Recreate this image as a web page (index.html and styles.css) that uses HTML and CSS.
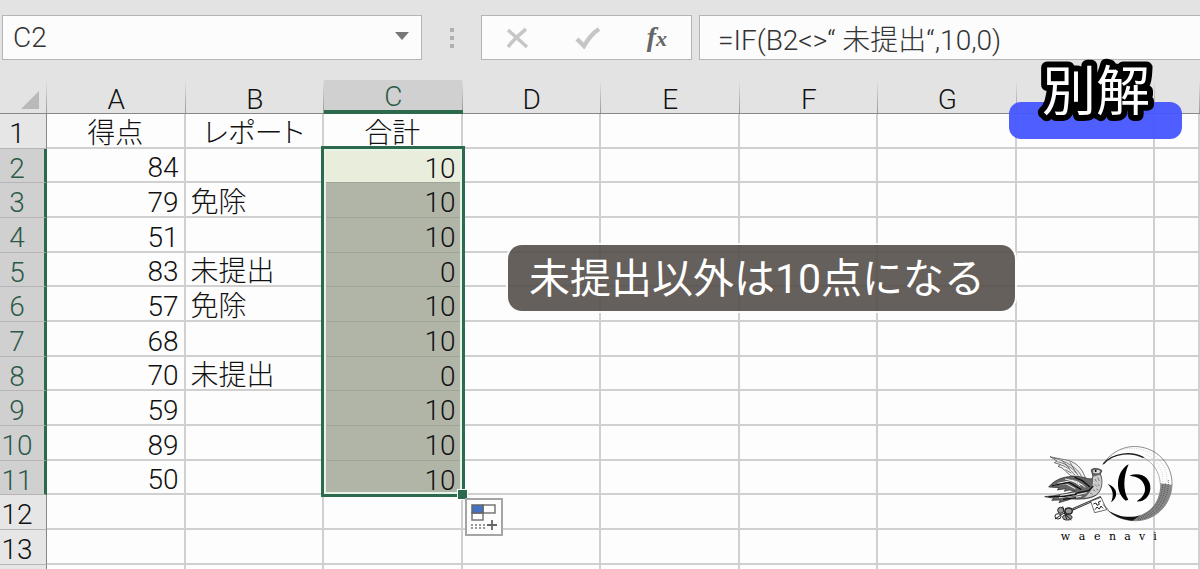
FILE: index.html
```
<!DOCTYPE html>
<html lang="ja">
<head>
    <meta charset="UTF-8">
    <meta name="viewport" content="width=device-width, initial-scale=1.0">
    <title>別解 - IF関数</title>
    <link rel="stylesheet" href="styles.css">
</head>
<body>
    <div class="window">
    <div class="formula-bar">
        <div class="name-box">
            <input type="text" id="cellName" aria-label="名前ボックス" value="C2">
            <button type="button" aria-label="名前の一覧">
                <svg width="14" height="8" viewBox="0 0 14 8"><path d="M0 0h14L7 8z" fill="#777"/></svg>
            </button>
        </div>
        <div class="dots"><i></i><i></i><i></i></div>
        <div class="tools">
            <button type="button" aria-label="キャンセル">
                <svg width="24" height="22" viewBox="0 0 24 22"><path d="M2 3l19 17M20 2C13 8 7 13 2 20" fill="none" stroke="#c6c6c6" stroke-width="3.5"/></svg>
            </button>
            <button type="button" aria-label="入力">
                <svg width="26" height="22" viewBox="0 0 26 22"><path d="M2 12l7 7C13 12 18 6 24 2" fill="none" stroke="#c6c6c6" stroke-width="4.5"/></svg>
            </button>
            <button type="button" class="fx" aria-label="関数の挿入">f<small>x</small></button>
        </div>
        <input type="text" class="formula" id="formula" aria-label="数式バー" value="=IF(B2&lt;&gt;“ 未提出“,10,0)">
    </div>

    <div class="sheet-area">
    <table class="sheet">
        <colgroup>
            <col class="col-head">
            <col><col><col><col><col><col><col><col>
            <col class="col-last">
        </colgroup>
        <thead>
            <tr>
                <th class="corner"><svg width="18" height="18" viewBox="0 0 18 18"><path d="M18 0v18H0z" fill="#b9b9b9"/></svg></th>
                <th>A</th>
                <th>B</th>
                <th class="active">C</th>
                <th>D</th>
                <th>E</th>
                <th>F</th>
                <th>G</th>
                <th></th>
                <th></th>
            </tr>
        </thead>
        <tbody>
            <tr class="titles"><th>1</th><td>得点</td><td>レポート</td><td>合計</td><td></td><td></td><td></td><td></td><td></td><td></td></tr>
            <tr class="picked">
                <th>2</th><td class="num">84</td><td></td>
                <td class="num total first">10
                    <div class="selection">
                        <span class="handle"></span>
                        <button type="button" class="autofill" aria-label="オートフィル オプション">
                            <svg width="28" height="28" viewBox="0 0 28 28">
                                <path d="M13 2h12v8H13zM2 10h11v7H2z" fill="#fff" stroke="#777" stroke-width="1.5"/>
                                <path d="M2 2h11v8H2z" fill="#4472c4" stroke="#666" stroke-width="1.5"/>
                                <path d="M1 22h14M1 25h14" stroke="#777" stroke-width="1.5" stroke-dasharray="2 2"/>
                                <path d="M22 17v10M17 22h10" stroke="#666" stroke-width="1.8"/>
                            </svg>
                        </button>
                    </div>
                </td>
                <td></td><td></td><td></td><td></td><td></td><td></td>
            </tr>
            <tr class="picked"><th>3</th><td class="num">79</td><td>免除</td><td class="num total">10</td><td></td><td></td><td></td><td></td><td></td><td></td></tr>
            <tr class="picked"><th>4</th><td class="num">51</td><td></td><td class="num total">10</td><td></td><td></td><td></td><td></td><td></td><td></td></tr>
            <tr class="picked"><th>5</th><td class="num">83</td><td>未提出</td><td class="num total">0</td><td></td><td></td><td></td><td></td><td></td><td></td></tr>
            <tr class="picked"><th>6</th><td class="num">57</td><td>免除</td><td class="num total">10</td><td></td><td></td><td></td><td></td><td></td><td></td></tr>
            <tr class="picked"><th>7</th><td class="num">68</td><td></td><td class="num total">10</td><td></td><td></td><td></td><td></td><td></td><td></td></tr>
            <tr class="picked"><th>8</th><td class="num">70</td><td>未提出</td><td class="num total">0</td><td></td><td></td><td></td><td></td><td></td><td></td></tr>
            <tr class="picked"><th>9</th><td class="num">59</td><td></td><td class="num total">10</td><td></td><td></td><td></td><td></td><td></td><td></td></tr>
            <tr class="picked"><th>10</th><td class="num">89</td><td></td><td class="num total">10</td><td></td><td></td><td></td><td></td><td></td><td></td></tr>
            <tr class="picked"><th>11</th><td class="num">50</td><td></td><td class="num total">10</td><td></td><td></td><td></td><td></td><td></td><td></td></tr>
            <tr><th>12</th><td></td><td></td><td></td><td></td><td></td><td></td><td></td><td></td><td></td></tr>
            <tr><th>13</th><td></td><td></td><td></td><td></td><td></td><td></td><td></td><td></td><td></td></tr>
            <tr><th></th><td></td><td></td><td></td><td></td><td></td><td></td><td></td><td></td><td></td></tr>
        </tbody>
    </table>
    </div>

    <div class="badge">
        <svg width="140" height="80" viewBox="0 0 140 80"><text x="16" y="58">別解</text></svg>
    </div>
    <div class="caption">未提出以外は10点になる</div>

    <svg class="logo" viewBox="0 0 510 390" role="img" aria-label="waenavi">
        <!-- ring -->
        <path d="M218 104C245 62 290 44 332 51C392 61 428 112 426 164C423 230 370 276 309 272C276 270 247 256 232 239" fill="none" stroke="#555" stroke-width="2"/>
        <path d="M232 239C262 260 300 267 334 254L309 272C276 270 247 256 232 239z" fill="#111"/>
        <path d="M391 160L426 164C423 230 370 276 309 272L334 254C371 238 391 209 391 160z" fill="#888"/>
        <path d="M220 102C250 67 306 64 341 83" fill="none" stroke="#222" stroke-width="4"/>
        <path d="M341 83C370 99 389 125 391 163" fill="none" stroke="#888" stroke-width="2"/>
        <g fill="none" stroke="#333" stroke-width="2" stroke-dasharray="3 3">
            <path d="M398 165C396 214 364 253 318 263"/>
            <path d="M406 160C405 219 366 261 316 267"/>
            <path d="M415 150C417 219 373 264 322 270"/>
        </g>
        <g fill="none" stroke="#999" stroke-width="2" stroke-dasharray="2 5">
            <path d="M270 60C320 46 370 62 398 104C408 120 412 140 410 158"/>
            <path d="M350 74C386 93 400 124 399 156"/>
        </g>
        <!-- mark -->
        <path d="M233 162C263 172 267 201 243 217C253 195 249 178 233 162z"/>
        <path d="M296 103C260 122 251 183 287 212L295 209C278 181 280 139 296 103z"/>
        <path d="M298 137C334 124 363 145 361 176C359 202 340 216 320 214C341 201 348 186 344 169C339 149 323 139 298 137z"/>
        <!-- key -->
        <g fill="none" stroke="#222">
            <path d="M128 238L213 201" stroke-width="7"/>
            <path d="M130 237L211 202" stroke="#ddd" stroke-width="2"/>
            <path d="M182 214L213 202L230 239L194 248z" fill="#fff" stroke-width="2"/>
            <path d="M190 222l8-3 3 7 7-3-3-7 8-3M195 239l6-8 7 6 5-9 6 7" stroke-width="3"/>
            <path d="M218 223L236 240" stroke-width="2"/>
            <ellipse cx="92" cy="241" rx="9" ry="9" fill="#999" stroke-width="3"/>
            <ellipse cx="116" cy="243" rx="11" ry="9" fill="#999" stroke-width="4"/>
            <ellipse cx="84" cy="259" rx="9" ry="8" fill="#fff" stroke-width="3"/>
            <ellipse cx="112" cy="262" rx="14" ry="8" fill="#999" stroke-width="3"/>
            <path d="M98 229l12 38M75 267l27-18 22 21" stroke-width="3"/>
        </g>
        <!-- dove -->
        <path d="M60 80C90 88 119 88 139 103C158 119 161 132 168 147L142 141L122 137L107 124L98 115L84 109L92 104L73 98L81 93z" fill="#eee" stroke="#333" stroke-width="2"/>
        <path d="M71 84C110 95 139 111 155 139M82 95C112 102 132 117 145 137M93 105C114 111 125 123 135 136M106 119L124 129M120 97L139 130M96 91L119 116" fill="none" stroke="#444" stroke-width="2"/>
        <path d="M56 171C77 145 108 138 139 139C161 140 176 149 184 146C195 140 181 123 184 119C190 113 207 114 216 122L211 132C220 152 217 181 199 195C181 208 151 208 124 207L87 218L91 210L65 211L72 205L44 200L72 197L109 190L136 183L118 180L103 184L107 176L82 180L87 173z" fill="#666" stroke="#222" stroke-width="2"/>
        <path d="M189 140L210 134C219 154 215 180 199 193C188 200 176 203 162 203C184 189 191 168 189 140z" fill="#ccc"/>
        <g fill="none" stroke="#eee" stroke-width="3">
            <path d="M83 160L128 151L151 168M105 147L142 155L166 172M70 165L107 161L136 176"/>
            <path d="M87 203L133 196L170 188M114 205L154 199M91 196L142 188M120 151L158 165"/>
        </g>
        <g fill="none" stroke="#111" stroke-width="4">
            <path d="M66 167L118 157L154 179M134 142L157 152L180 171M135 190L176 182L190 168"/>
            <path d="M56 200L104 199L140 193M99 208L138 203"/>
        </g>
        <path d="M195 147l4 8M203 143l5 10M195 163l6 7M203 162l6 6M188 178l8 5M199 177l6 3M180 190l9 3" fill="none" stroke="#555" stroke-width="2"/>
        <path d="M190 120L207 120L211 126L205 130L190 129z" fill="#ddd"/>
        <circle cx="197" cy="123" r="3"/>
        <text x="92 146 192 237 283 327 370" y="331">waenavi</text>
    </svg>
    </div>
</body>
</html>
```
FILE: styles.css
```
* {
    box-sizing: border-box;
}
body {
    margin: 0;
    background: #e3e3e3;
    font-family: Roboto, "Noto Sans CJK JP", sans-serif;
    font-size: 28px;
    font-weight: 300;
    color: #111;
}
button {
    padding: 0;
    border: none;
    background: none;
}
input {
    min-width: 0;
    border: none;
    outline: none;
    background: none;
    font: inherit;
    color: #333;
}
.window {
    position: relative;
    display: flex;
    flex-direction: column;
    height: 100vh;
    overflow: hidden;
}

/* formula bar */
.formula-bar {
    display: flex;
    padding: 15px 0 20px 2px;
}
.name-box, .tools, .formula {
    height: 45px;
    border: 1px solid #b5b5b5;
    background: #fcfcfc;
}
.name-box {
    display: flex;
    align-items: center;
    width: 420px;
    padding: 0 12px 0 10px;
}
.name-box input {
    flex: 1;
    padding: 0;
}
.name-box button {
    display: flex;
    padding-bottom: 4px;
}
.dots {
    display: flex;
    flex-direction: column;
    align-items: center;
    justify-content: center;
    gap: 4px;
    width: 59px;
}
.dots i {
    width: 4px;
    height: 4px;
    background: #b0b0b0;
}
.tools {
    display: flex;
    align-items: center;
    justify-content: space-between;
    width: 211px;
    padding: 0 24px;
}
.tools button {
    display: flex;
}
.tools .fx {
    align-items: baseline;
    font: italic bold 28px "Liberation Serif", serif;
    line-height: 32px;
    color: #666;
}
.fx small {
    font-size: 22px;
}
.formula {
    flex: 1;
    margin-left: 7px;
    padding: 0 18px;
    border-right: none;
}

/* sheet */
.sheet-area {
    flex: 1;
    min-height: 0;
    overflow: hidden;
}
.sheet {
    width: 100%;
    table-layout: fixed;
    border-collapse: separate;
    border-spacing: 0;
    line-height: 26px;
}
.col-head {
    width: 47px;
}
.col-last {
    width: 45px;
}
th, td {
    padding: 0;
    white-space: nowrap;
}
th {
    font-weight: 300;
}
thead th {
    height: 34px;
    padding-top: 6px;
    border-bottom: 1px solid #888;
    background: linear-gradient(#e3e3e3, #999) right / 1px 100% no-repeat;
}
thead .active {
    padding-top: 4px;
    border-bottom: 4px solid #2b6a4d;
    background-color: #d0d0d0;
    color: #2c5a48;
}
.corner svg {
    display: block;
    margin-left: 21px;
}
tbody tr {
    height: 35px;
}
tbody tr:nth-child(3n+2) {
    height: 34px;
}
tbody th {
    padding: 6px 12px 0 0;
    border-right: 1px solid #888;
    border-bottom: 1px solid #b5b5b5;
    background: #e6e6e6;
}
.picked th {
    padding-right: 10px;
    border-right: 3px solid #2b6a4d;
    background: #d0d0d0;
    color: #2c5a48;
}
td {
    padding: 6px 0 0 5px;
    border-right: 2px solid #d0d0d0;
    border-bottom: 2px solid #d0d0d0;
    background: #fdfdfd;
}
.titles td {
    padding-left: 0;
    text-align: center;
    font-feature-settings: "palt";
}
td.num {
    padding-right: 5px;
    text-align: right;
}
.total {
    border-bottom: 1px solid #a0a59a;
    background: #b1b5a8;
}
.first {
    position: relative;
    background: #e9eddc;
}
.selection {
    position: absolute;
    top: -3px;
    left: -3px;
    right: -4px;
    height: 351px;
    border: 3px solid #2b6a4d;
    box-shadow: inset 0 0 0 2px #e6f3e6;
}
.handle {
    position: absolute;
    right: -6px;
    bottom: -6px;
    width: 11px;
    height: 11px;
    border: 1px solid #fff;
    background: #2b6a4d;
}
.autofill {
    position: absolute;
    top: 349px;
    left: 141px;
    display: flex;
    align-items: center;
    justify-content: center;
    width: 38px;
    height: 38px;
    border: 2px solid #a5a5a5;
    background: #fdfdfd;
}

/* telop */
.badge {
    position: absolute;
    top: 102px;
    right: 18px;
    width: 173px;
    height: 37px;
    border-radius: 12px;
    background: rgba(70, 86, 255, 0.95);
}
.badge svg {
    position: absolute;
    left: 17px;
    bottom: 6px;
}
.badge text {
    font-size: 54px;
    font-weight: 400;
    fill: #fff;
    stroke: #000;
    stroke-width: 12px;
    stroke-linejoin: round;
    paint-order: stroke;
}
.caption {
    position: absolute;
    top: 245px;
    left: 508px;
    padding: 2px 30px 0 21px;
    border-radius: 14px;
    background: rgba(80, 74, 70, 0.88);
    box-shadow: 0 0 0 2px #fdfdfd;
    font-size: 41px;
    font-weight: 400;
    line-height: 64px;
    white-space: nowrap;
    color: #fff;
}
.logo {
    position: absolute;
    right: 0;
    bottom: 9px;
    width: 170px;
    height: 130px;
}
.logo text {
    font: 33px "DejaVu Serif", serif;
}
```
